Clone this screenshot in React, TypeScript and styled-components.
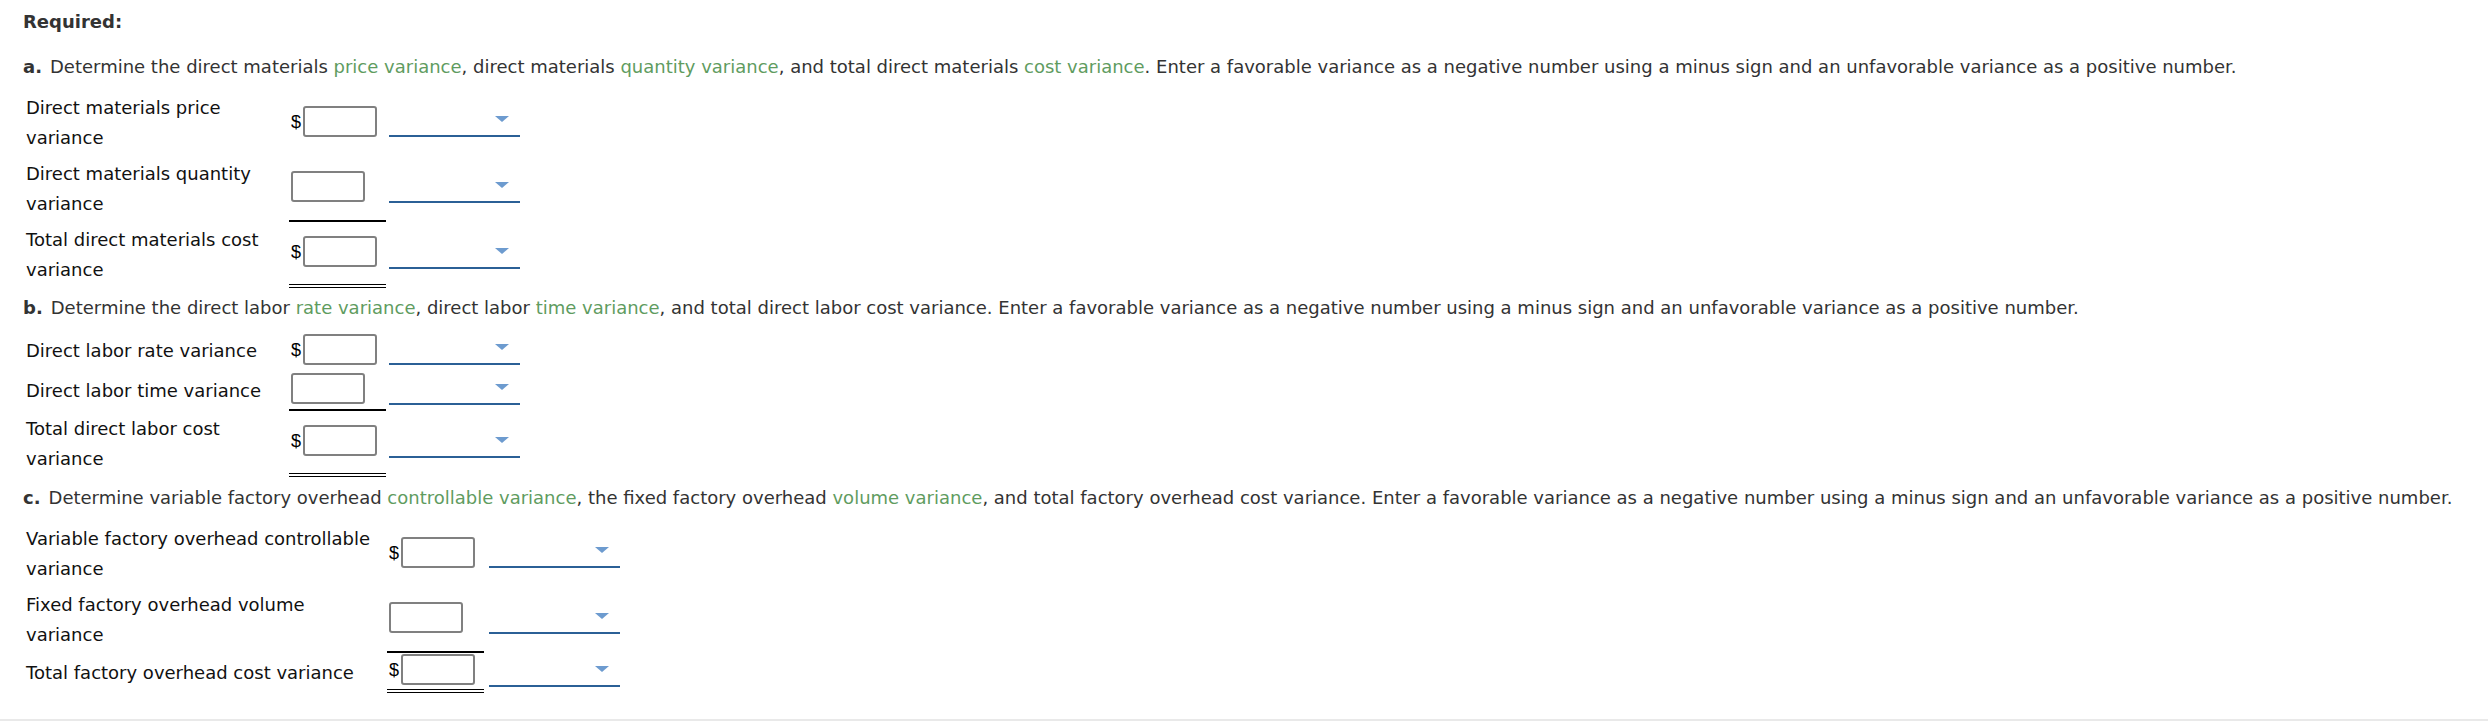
import React from "react";
import styled, { createGlobalStyle } from "styled-components";

const Global = createGlobalStyle`
  html, body { margin: 0; padding: 0; background: #fff; }
  *, *::before, *::after { box-sizing: border-box; }
`;

const Page = styled.div`
  font-family: "DejaVu Sans", Verdana, sans-serif;
  font-size: 18px;
  color: #333;
  padding: 7px 0 0 23px;
  height: 721px;
  border-bottom: 2px solid #e9e9e9;
  overflow: hidden;
`;

const Heading = styled.div`
  font-weight: bold;
  line-height: 30px;
  color: #333;
`;

const Instruction = styled.p<{ $top: number }>`
  margin: ${(p) => p.$top}px 0 0 0;
  line-height: 30px;
  white-space: nowrap;
  color: #333;
`;

const Letter = styled.b`
  margin-right: 8px;
`;

const Term = styled.span`
  color: #5f9c5f;
`;

const Table = styled.div`
  margin-top: 8px;
  display: flex;
  flex-direction: column;
`;

const Row = styled.div<{ $labelW: number; $gap: number }>`
  display: grid;
  grid-template-columns: ${(p) => p.$labelW}px 97px 131px;
  column-gap: ${(p) => p.$gap}px;
  min-height: 40px;
  align-items: center;
`;

const Label = styled.div`
  line-height: 30px;
  padding: 3px 8px 3px 3px;
  color: #111;
`;

const Cell = styled.div<{ $rule: "none" | "single" | "double" }>`
  align-self: stretch;
  display: flex;
  align-items: center;
  padding: 0 0 3px 2px;
  border-bottom: ${(p) =>
    p.$rule === "single"
      ? "2px solid #000"
      : p.$rule === "double"
      ? "4px double #000"
      : "none"};
`;

const Dollar = styled.span`
  font-family: "Liberation Sans", Arial, sans-serif;
  font-size: 18px;
  color: #000;
  width: 12px;
  line-height: 1;
`;

const Box = styled.div`
  width: 74px;
  height: 31px;
  border: 2px solid #808080;
  border-radius: 3px;
  background: #fff;
`;

const Dropdown = styled.div`
  position: relative;
  width: 131px;
  height: 31px;
  margin-bottom: 3px;
  border-bottom: 2px solid #2b6096;
  &::after {
    content: "";
    position: absolute;
    right: 11px;
    top: 10px;
    border-left: 7px solid transparent;
    border-right: 7px solid transparent;
    border-top: 6px solid #6d9bcf;
  }
`;

type Item = { label: string; dollar: boolean; rule: "none" | "single" | "double" };

const Section = ({ items, labelW, gap }: { items: Item[]; labelW: number; gap: number }) => (
  <Table>
    {items.map((it) => (
      <Row key={it.label} $labelW={labelW} $gap={gap}>
        <Label>{it.label}</Label>
        <Cell $rule={it.rule}>
          {it.dollar && <Dollar>$</Dollar>}
          <Box />
        </Cell>
        <Dropdown />
      </Row>
    ))}
  </Table>
);

const tail =
  " Enter a favorable variance as a negative number using a minus sign and an unfavorable variance as a positive number.";

export default function App() {
  return (
    <>
      <Global />
      <Page>
        <Heading>Required:</Heading>
        <Instruction $top={15}>
          <Letter>a.</Letter>Determine the direct materials <Term>price variance</Term>, direct
          materials <Term>quantity variance</Term>, and total direct materials{" "}
          <Term>cost variance</Term>.{tail}
        </Instruction>
        <Section
          labelW={263}
          gap={3}
          items={[
            { label: "Direct materials price variance", dollar: true, rule: "none" },
            { label: "Direct materials quantity variance", dollar: false, rule: "single" },
            { label: "Total direct materials cost variance", dollar: true, rule: "double" },
          ]}
        />
        <Instruction $top={5}>
          <Letter>b.</Letter>Determine the direct labor <Term>rate variance</Term>, direct labor{" "}
          <Term>time variance</Term>, and total direct labor cost variance.{tail}
        </Instruction>
        <Section
          labelW={263}
          gap={3}
          items={[
            { label: "Direct labor rate variance", dollar: true, rule: "none" },
            { label: "Direct labor time variance", dollar: false, rule: "single" },
            { label: "Total direct labor cost variance", dollar: true, rule: "double" },
          ]}
        />
        <Instruction $top={6}>
          <Letter>c.</Letter>Determine variable factory overhead{" "}
          <Term>controllable variance</Term>, the fixed factory overhead{" "}
          <Term>volume variance</Term>, and total factory overhead cost variance.{tail}
        </Instruction>
        <Section
          labelW={359}
          gap={5}
          items={[
            {
              label: "Variable factory overhead controllable variance",
              dollar: true,
              rule: "none",
            },
            { label: "Fixed factory overhead volume variance", dollar: false, rule: "single" },
            { label: "Total factory overhead cost variance", dollar: true, rule: "double" },
          ]}
        />
      </Page>
    </>
  );
}
